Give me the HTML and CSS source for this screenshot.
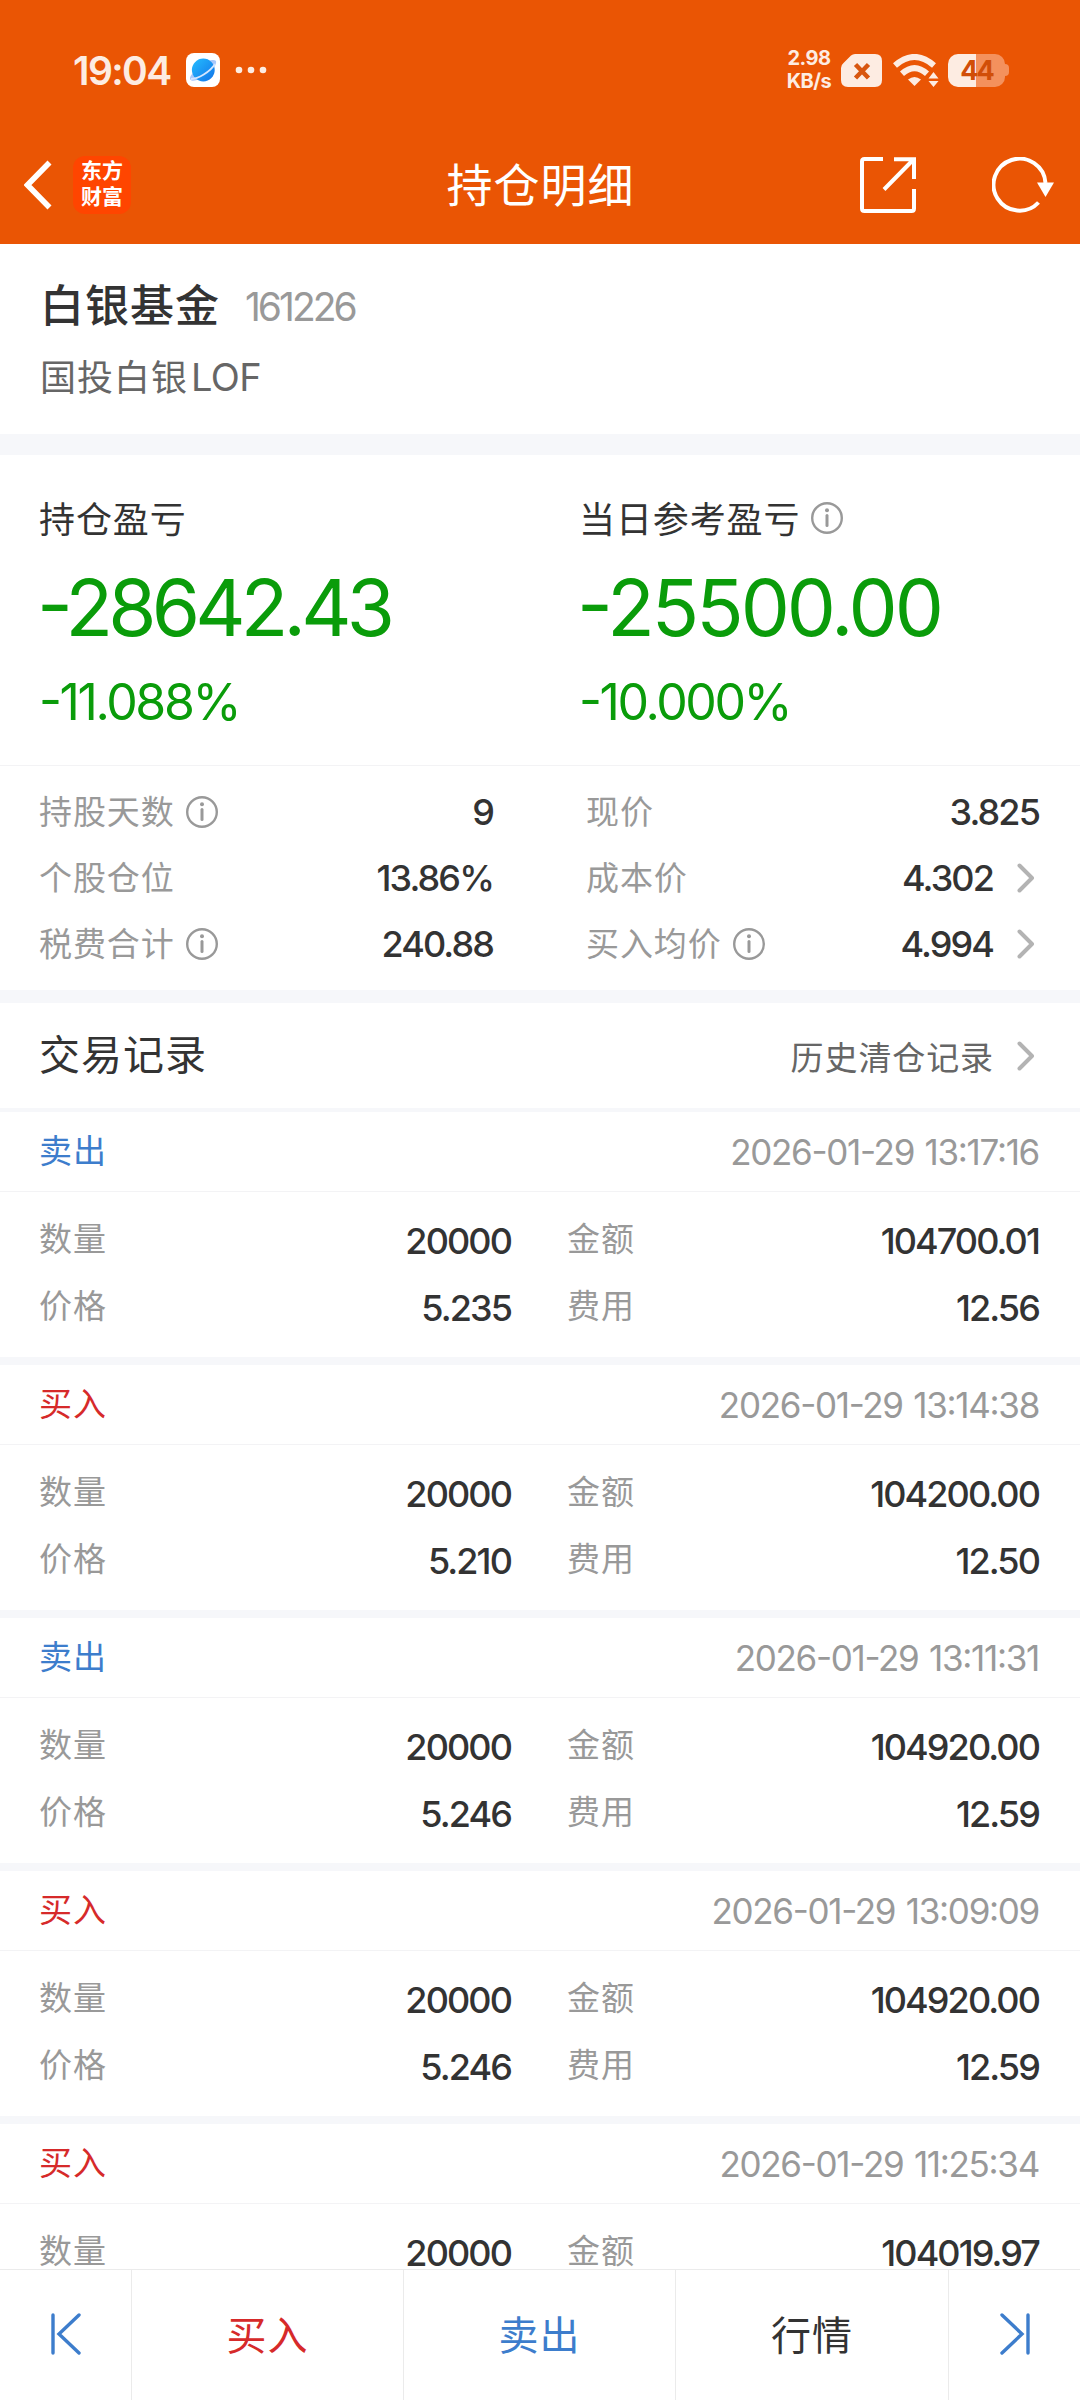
FILE: index.html
```html
<!DOCTYPE html>
<html lang="zh-CN">
<head>
    <meta charset="UTF-8">
    <meta name="viewport" content="width=device-width, initial-scale=1.0">
    <title>持仓明细</title>
    <link rel="stylesheet" href="styles.css">
</head>
<body>
    <!-- 公用图标 -->
    <svg class="defs">
        <symbol id="info" viewBox="0 0 32 32">
            <circle cx="16" cy="16" r="14.8" fill="none" stroke="#999" stroke-width="2.4"/>
            <circle cx="16" cy="8.2" r="2" fill="#999"/>
            <path d="M16 13.4V23.6" stroke="#999" stroke-width="3" stroke-linecap="round"/>
        </symbol>
        <symbol id="more" viewBox="0 0 18 30">
            <path d="M2.5 2.5L15 15L2.5 27.5" fill="none" stroke="#b3b3b3" stroke-width="4" stroke-linecap="round" stroke-linejoin="round"/>
        </symbol>
    </svg>
    <div class="page">
        <header class="top">
            <div class="status">
                <span class="time">19:04</span>
                <svg class="browser" viewBox="0 0 34 34">
                    <defs>
                        <linearGradient id="ball" x1="0" y1="0" x2="1" y2="1">
                            <stop offset="0" stop-color="#25bdff"/>
                            <stop offset="1" stop-color="#1273e8"/>
                        </linearGradient>
                    </defs>
                    <rect width="34" height="34" rx="8" fill="#fff"/>
                    <path d="M22 8C28 6 31 7 30 10C29 15 22 21 16 25C10 28 5 29 4 26C3.7 24 5 22 7 20Z" fill="#a9c8fb"/>
                    <circle cx="17.3" cy="17" r="11.4" fill="url(#ball)"/>
                    <path d="M5 26C12 26 24 19 29 11" fill="none" stroke="#d5e6ff" stroke-width="1.8"/>
                </svg>
                <svg class="dots" viewBox="0 0 32 8" fill="#fdece2">
                    <circle cx="4" cy="4" r="3.3"/><circle cx="16" cy="4" r="3.3"/><circle cx="28" cy="4" r="3.3"/>
                </svg>
                <div class="speed"><span>2.98</span><span>KB/s</span></div>
                <svg class="sim" viewBox="0 0 41 33">
                    <path d="M14 0H34Q41 0 41 7V26Q41 33 34 33H7Q0 33 0 26V14Q0 11 2.5 9L10 1.6Q11.8 0 14 0Z" fill="#fdece2"/>
                    <path d="M14.5 10.5L27.5 24M27.5 10.5L14.5 24" stroke="#d8560f" stroke-width="4.5"/>
                </svg>
                <svg class="wifi" viewBox="0 0 46 33">
                    <g fill="none" stroke="#fdece2" stroke-width="6">
                        <path d="M2 11.5Q21.5 -5.5 41 11.5"/>
                        <path d="M9 19.8Q21.5 8.5 34 19.8"/>
                    </g>
                    <path d="M21.5 32L15 25.5Q21.5 20.5 28 25.5Z" fill="#fdece2"/>
                    <path d="M40.5 18L45.5 24.5H35.5ZM40.5 33L35.5 27H45.5Z" fill="#fdece2"/>
                </svg>
                <div class="battery">
                    <div class="cell"><span>44</span></div>
                    <i></i>
                </div>
            </div>
            <nav class="nav">
                <svg class="back" viewBox="0 0 28 50">
                    <path d="M25.5 2.5L3.5 25L25.5 47.5" fill="none" stroke="#fff" stroke-width="5.6"/>
                </svg>
                <div class="logo">东方<br>财富</div>
                <h1>持仓明细</h1>
                <svg class="share" viewBox="0 0 56 56" fill="none" stroke="#fff" stroke-width="4">
                    <path d="M23 2H4.5Q2 2 2 4.5V51.5Q2 54 4.5 54H51.5Q54 54 54 51.5V32"/>
                    <path d="M34 2.2H54V22M53 3L24 32.5"/>
                </svg>
                <svg class="refresh" viewBox="0 0 62 56">
                    <path d="M46.5 45.5A26 26 0 1 1 53.5 26" fill="none" stroke="#fff" stroke-width="4"/>
                    <path d="M45 25.5H62L53.5 40Z" fill="#fff"/>
                </svg>
            </nav>
        </header>

        <section class="fund">
            <div class="fund-name"><h2>白银基金</h2><span>161226</span></div>
            <p>国投白银<em>LOF</em></p>
        </section>

        <!-- 盈亏 -->
        <section class="profit">
            <div class="profit-item">
                <div class="profit-title"><span>持仓盈亏</span></div>
                <div class="money total">-28642.43</div>
                <div class="rate">-11.088%</div>
            </div>
            <div class="profit-item">
                <div class="profit-title"><span>当日参考盈亏</span><svg class="info"><use href="#info"/></svg></div>
                <div class="money">-25500.00</div>
                <div class="rate">-10.000%</div>
            </div>
        </section>
        <section class="detail">
            <div class="left">
                <div class="row"><label>持股天数</label><svg class="info"><use href="#info"/></svg><b>9</b></div>
                <div class="row"><label>个股仓位</label><b>13.86%</b></div>
                <div class="row"><label>税费合计</label><svg class="info"><use href="#info"/></svg><b>240.88</b></div>
            </div>
            <div class="right">
                <div class="row"><label>现价</label><b>3.825</b></div>
                <div class="row"><label>成本价</label><b>4.302</b><svg class="more"><use href="#more"/></svg></div>
                <div class="row"><label>买入均价</label><svg class="info"><use href="#info"/></svg><b>4.994</b><svg class="more"><use href="#more"/></svg></div>
            </div>
        </section>

        <!-- 交易记录 -->
        <section class="history">
            <h3>交易记录</h3>
            <span>历史清仓记录</span>
            <svg class="more"><use href="#more"/></svg>
        </section>
        <ul class="records">
            <li>
                <div class="head"><span class="sell">卖出</span><time>2026-01-29 13:17:16</time></div>
                <div class="body">
                    <label>数量</label><b>20000</b><label>金额</label><b>104700.01</b>
                    <label>价格</label><b>5.235</b><label>费用</label><b>12.56</b>
                </div>
            </li>
            <li>
                <div class="head"><span class="buy">买入</span><time>2026-01-29 13:14:38</time></div>
                <div class="body">
                    <label>数量</label><b>20000</b><label>金额</label><b>104200.00</b>
                    <label>价格</label><b>5.210</b><label>费用</label><b>12.50</b>
                </div>
            </li>
            <li>
                <div class="head"><span class="sell">卖出</span><time>2026-01-29 13:11:31</time></div>
                <div class="body">
                    <label>数量</label><b>20000</b><label>金额</label><b>104920.00</b>
                    <label>价格</label><b>5.246</b><label>费用</label><b>12.59</b>
                </div>
            </li>
            <li>
                <div class="head"><span class="buy">买入</span><time>2026-01-29 13:09:09</time></div>
                <div class="body">
                    <label>数量</label><b>20000</b><label>金额</label><b>104920.00</b>
                    <label>价格</label><b>5.246</b><label>费用</label><b>12.59</b>
                </div>
            </li>
            <li class="last">
                <div class="head"><span class="buy">买入</span><time>2026-01-29 11:25:34</time></div>
                <div class="body">
                    <label>数量</label><b>20000</b><label>金额</label><b>104019.97</b>
                </div>
            </li>
        </ul>

        <footer class="bar">
            <div class="prev">
                <svg viewBox="0 0 30 42" fill="none" stroke="#3d7dcc" stroke-width="3.4" stroke-linecap="round">
                    <path d="M2 2V40M28 2L8 21L28 40"/>
                </svg>
            </div>
            <div class="buy">买入</div>
            <div class="sell">卖出</div>
            <div>行情</div>
            <div class="next">
                <svg viewBox="0 0 30 42" fill="none" stroke="#3d7dcc" stroke-width="3.4" stroke-linecap="round">
                    <path d="M28 2V40M2 2L22 21L2 40"/>
                </svg>
            </div>
        </footer>
    </div>
</body>
</html>
```
FILE: styles.css
```css
*{
    margin: 0;
    padding: 0;
    box-sizing: border-box;
}
body{
    font-family: Inter, "Noto Sans CJK SC", sans-serif;
    color: #333;
    background-color: #fff;
}
.defs{
    display: none;
}
svg{
    flex: none;
}
ul{
    list-style: none;
}
h1,h2,h3{
    font-weight: 400;
}
b{
    font-weight: 500;
}
.page{
    width: 1080px;
    height: 2400px;
    display: flex;
    flex-direction: column;
    overflow: hidden;
}
/* 顶部 */
.top{
    height: 244px;
    flex: none;
    background-color: #ea5504;
    color: #fff;
}
.status{
    height: 126px;
    padding: 14px 71px 0 73px;
    display: flex;
    align-items: center;
    color: #fdece2;
}
.time{
    width: 113px;
    font-size: 39px;
    font-weight: 600;
    letter-spacing: -1.6px;
    white-space: nowrap;
}
.browser{
    width: 34px;
    height: 34px;
}
.dots{
    width: 32px;
    height: 8px;
    margin-left: 15px;
}
.speed{
    width: 50px;
    margin-left: auto;
    margin-right: 7px;
    display: flex;
    flex-direction: column;
    align-items: center;
    font-size: 20px;
    line-height: 23px;
    font-weight: 700;
    letter-spacing: -0.5px;
}
.sim{
    width: 41px;
    height: 33px;
}
.wifi{
    width: 46px;
    height: 33px;
    margin-left: 11px;
}
.battery{
    margin-left: 9px;
    display: flex;
    align-items: center;
}
.cell{
    width: 57px;
    height: 33px;
    border-radius: 10px;
    background: linear-gradient(90deg, #fdece2 28px, #f4915d 28px);
    color: #d14e08;
    font-size: 27px;
    line-height: 33px;
    font-weight: 700;
    text-align: center;
    letter-spacing: -2px;
}
.battery i{
    width: 4px;
    height: 12px;
    border-radius: 0 4px 4px 0;
    background-color: #f4915d;
}
.nav{
    height: 118px;
    padding: 0 26px 0 24px;
    display: flex;
    align-items: center;
}
.back{
    width: 28px;
    height: 50px;
}
.logo{
    width: 58px;
    height: 58px;
    margin-left: 21px;
    padding-top: 2px;
    border-radius: 12px;
    background-color: #ff4500;
    text-align: center;
    font-size: 21px;
    line-height: 26px;
    font-weight: 700;
}
.nav h1{
    flex: 1;
    padding-left: 139px;
    padding-right: 49px;
    text-align: center;
    font-size: 46px;
    line-height: 60px;
    letter-spacing: 1px;
}
.share{
    width: 56px;
    height: 56px;
}
.refresh{
    width: 62px;
    height: 56px;
    margin-left: 76px;
}
/* 基金名称 */
.fund{
    height: 211px;
    flex: none;
    padding: 32px 40px 0;
    border-bottom: 21px solid #f6f7fa;
}
.fund-name{
    display: flex;
    align-items: center;
    height: 60px;
}
.fund-name h2{
    font-size: 44px;
    line-height: 60px;
    font-weight: 500;
    letter-spacing: 1px;
}
.fund-name span{
    margin-left: 25px;
    font-size: 39px;
    letter-spacing: -3px;
    color: #999;
}
.fund p{
    margin-top: 16px;
    font-size: 36px;
    line-height: 50px;
    letter-spacing: 1px;
    color: #666;
}
.fund em{
    margin-left: 3px;
    font-style: normal;
    font-size: 38px;
    letter-spacing: -0.6px;
}
/* 盈亏 */
.profit{
    height: 311px;
    flex: none;
    padding: 38px 39px 0;
    display: flex;
    border-bottom: 1px solid #f3f3f5;
}
.profit-item{
    width: 540px;
    flex: none;
}
.profit-title{
    height: 50px;
    display: flex;
    align-items: center;
    font-size: 36px;
    letter-spacing: 0.9px;
}
.profit-title span{
    padding-bottom: 3px;
}
.info{
    width: 32px;
    height: 32px;
    margin-left: 11px;
}
.money,.rate{
    color: #0a9c0a;
    font-feature-settings: "case";
}
.money{
    margin-top: 15px;
    margin-left: -2px;
    font-size: 78px;
    line-height: 100px;
    letter-spacing: -3px;
}
.money.total{
    letter-spacing: -4.8px;
}
.rate{
    margin-top: 14px;
    font-size: 50px;
    line-height: 60px;
    letter-spacing: -2.4px;
}
.detail{
    height: 237px;
    flex: none;
    padding: 13px 40px 0 39px;
    display: flex;
    justify-content: space-between;
    border-bottom: 13px solid #f6f7fa;
}
.left{
    width: 455px;
}
.right{
    width: 454px;
}
.row{
    height: 66px;
    display: flex;
    align-items: center;
}
label{
    padding-bottom: 4px;
    font-size: 33px;
    letter-spacing: 0.9px;
    color: #999;
}
b{
    margin-left: auto;
    padding-right: 1px;
    font-size: 36px;
    letter-spacing: -1.9px;
    white-space: nowrap;
}
.more{
    width: 18px;
    height: 30px;
    margin-left: 23px;
    margin-right: 5px;
}
/* 交易记录 */
.history{
    height: 109px;
    flex: none;
    padding: 0 40px 0 39px;
    display: flex;
    align-items: center;
    border-bottom: 4px solid #f6f7fa;
}
.history h3{
    padding-bottom: 7px;
    font-size: 41px;
    letter-spacing: 1px;
}
.history span{
    margin-left: auto;
    font-size: 33px;
    letter-spacing: 0.9px;
    color: #666;
}
.records{
    flex: 1;
    min-height: 0;
    overflow: hidden;
}
.records li{
    height: 253px;
    border-bottom: 8px solid #f6f7fa;
}
.records .last{
    height: auto;
    border-bottom: none;
}
.head{
    height: 80px;
    padding: 0 40px 0 39px;
    display: flex;
    align-items: center;
    justify-content: space-between;
    border-bottom: 1px solid #f3f3f5;
}
.head span{
    padding-bottom: 5px;
    font-size: 33px;
    letter-spacing: 0.9px;
}
.head time{
    padding-right: 1px;
    font-size: 35px;
    letter-spacing: -1.3px;
    word-spacing: 2px;
    color: #999;
    font-feature-settings: "case";
}
.body{
    padding: 15px 40px 0 39px;
    display: grid;
    grid-template-columns: 100px 373px 100px 1fr;
    grid-auto-rows: 67px;
    align-items: center;
}
.body label,.body b{
    line-height: 30px;
}
.body label:nth-of-type(even){
    margin-left: 55px;
    white-space: nowrap;
}
.buy{
    color: #d62a2a;
}
.sell{
    color: #3d7dcc;
}
/* 底部 */
.bar{
    height: 131px;
    flex: none;
    display: grid;
    grid-template-columns: 132px 272px 272px 273px 131px;
    border-top: 1px solid #ebebeb;
    font-size: 40px;
    letter-spacing: 1px;
    background-color: #fff;
}
.bar div{
    padding-bottom: 5px;
    display: flex;
    align-items: center;
    justify-content: center;
    border-right: 1px solid #ebebeb;
}
.bar .next{
    border-right: none;
}
.bar svg{
    width: 30px;
    height: 42px;
    margin-top: 3px;
}
```
